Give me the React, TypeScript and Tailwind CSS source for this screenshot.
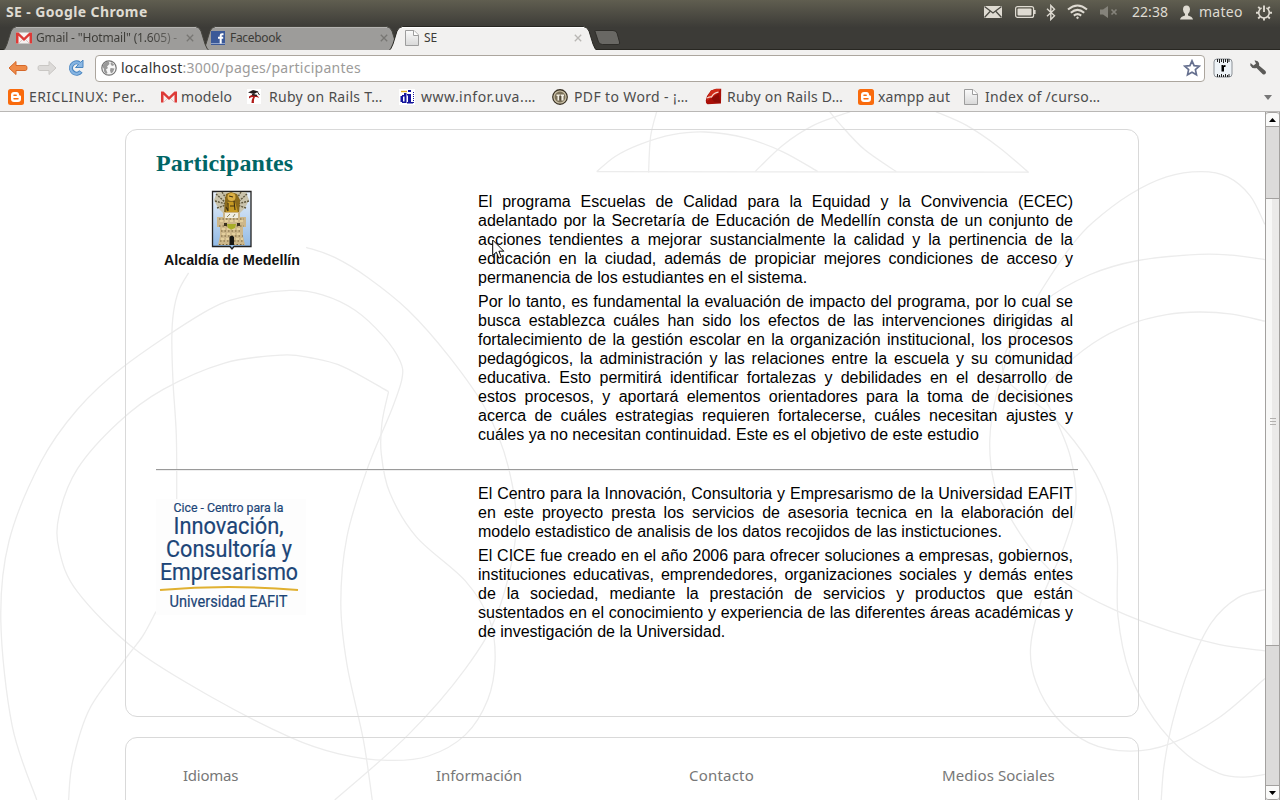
import React from "react";

type Pt = [number, number];

/* Smooth Catmull-Rom path through a list of points. */
function smooth(pts: Pt[]): string {
  let d = `M${pts[0][0]} ${pts[0][1]}`;
  for (let i = 0; i < pts.length - 1; i++) {
    const p0 = pts[i - 1] || pts[i];
    const p1 = pts[i];
    const p2 = pts[i + 1];
    const p3 = pts[i + 2] || p2;
    d += `C${p1[0] + (p2[0] - p0[0]) / 6} ${p1[1] + (p2[1] - p0[1]) / 6} ${p2[0] - (p3[0] - p1[0]) / 6} ${p2[1] - (p3[1] - p1[1]) / 6} ${p2[0]} ${p2[1]}`;
  }
  return d;
}

const leftCurves: Pt[][] = [
  [[750, 312], [820, 335], [900, 380], [1000, 455], [1100, 560], [1190, 680], [1245, 810], [1264, 960], [1220, 1140], [1140, 1270], [1000, 1420], [820, 1568]],
  [[90, 1568], [30, 1400], [2, 1160], [22, 980], [100, 800], [190, 680], [300, 585], [500, 460], [600, 424], [710, 410], [790, 420], [870, 455], [940, 515], [980, 570], [985, 610], [960, 680], [900, 815], [850, 970], [835, 1120], [850, 1260], [890, 1430], [912, 1568]],
  [[168, 1568], [178, 1480], [220, 1360], [305, 1250], [350, 1195], [382, 1140]],
  [[462, 370], [438, 410], [425, 460], [421, 520], [424, 620], [432, 740], [433, 885]],
  [[952, 640], [840, 583], [760, 563], [690, 557], [550, 575], [400, 635], [290, 710], [190, 815], [145, 920], [145, 1000], [190, 1095], [330, 1225], [520, 1335], [710, 1425], [830, 1463], [950, 1478], [1050, 1468], [1140, 1420], [1195, 1340], [1213, 1250], [1200, 1160], [1140, 1070], [1020, 970], [955, 870], [934, 780], [936, 710], [952, 640]],
];

const rightCurves: Pt[][] = [
  [[-106, 140], [-60, 105], [0, 78], [80, 56], [160, 50], [260, 64], [350, 95], [436, 140]],
  [[42, 0], [26, 60], [21, 142]],
  [[282, 140], [350, 80], [425, 35], [515, 4]],
  [[465, 4], [490, 32], [550, 90], [628, 140]],
  [[725, 4], [800, 35], [880, 85], [952, 142]],
  [[1531, 260], [1495, 195], [1440, 152], [1375, 140], [1290, 152], [1200, 192], [1110, 255], [1060, 305], [990, 400], [925, 505], [875, 640], [857, 750], [868, 850], [900, 915], [960, 1000], [1040, 1073], [1160, 1135], [1300, 1185], [1420, 1215], [1531, 1229]],
  [[1531, 340], [1450, 330], [1370, 328], [1220, 342], [1100, 375], [990, 435], [920, 510], [888, 575], [905, 620], [960, 660], [1020, 705], [1100, 800], [1150, 900], [1169, 1010], [1171, 1150], [1200, 1280], [1260, 1385], [1340, 1465], [1420, 1508], [1480, 1516], [1531, 1510]],
  [[1531, 480], [1450, 464], [1370, 459], [1290, 465], [1200, 487], [1110, 530], [1020, 600], [990, 645], [1020, 705], [1055, 790], [1068, 890], [1040, 990], [985, 1110], [957, 1220], [970, 1300], [1020, 1380], [1100, 1438], [1200, 1457], [1300, 1440], [1420, 1380], [1531, 1292]],
  [[1531, 1090], [1465, 1108], [1400, 1165], [1345, 1270], [1305, 1390], [1284, 1490], [1277, 1568]],
  [[-106, 140], [952, 141]],
];

function Backdrop() {
  return (
    <svg className="pointer-events-none absolute inset-0 h-[688px] w-[1265px]" fill="none" stroke="#ececec" strokeWidth="1.3">
      <g transform="translate(0 -2) scale(.40816 .44005)">
        {leftCurves.map((c, i) => (
          <path key={i} d={smooth(c)} vectorEffect="non-scaling-stroke" />
        ))}
      </g>
      <g transform="translate(640 -2) scale(.40816 .44005)">
        {rightCurves.map((c, i) => (
          <path key={i} d={smooth(c)} vectorEffect="non-scaling-stroke" />
        ))}
      </g>
    </svg>
  );
}

const Gmail = () => (
  <svg width="16" height="16" viewBox="0 0 16 16" className="shrink-0">
    <rect x="0" y="2.500" width="16" height="11" fill="#f6f1f0" />
    <path d="M3 13l4-4M13 13L9 9" stroke="#d9c9c7" />
    <path d="M0 2.500h2.500L8 7.800l5.500-5.300H16v11h-2.500V5.800L8 11 2.500 5.800v7.700H0z" fill="#dd3a37" />
  </svg>
);
const Facebook = () => (
  <svg width="14" height="14" viewBox="0 0 14 14" className="shrink-0">
    <rect width="14" height="14" fill="#3b5998" />
    <path d="M0 12h14v1H0z" fill="#8fa3cb" />
    <path d="M12.500 3.200h-1.400c-1 0-1.400.5-1.400 1.400V12.500M7 6.800h5.200" stroke="#fff" strokeWidth="2" fill="none" />
  </svg>
);
const Page = () => (
  <svg width="16" height="16" viewBox="0 0 16 16" className="shrink-0">
    <defs>
      <linearGradient id="pg" x2="0" y2="1"><stop stopColor="#fbfbfb" /><stop offset="1" stopColor="#d8d8d8" /></linearGradient>
    </defs>
    <path d="M1.500.5h8.500l4.500 4.500v10.500h-13z" fill="url(#pg)" stroke="#9d9d9d" />
    <path d="M9.500.5V5.500H14.500" fill="#fff" stroke="#9d9d9d" />
  </svg>
);
const Blogger = () => (
  <svg width="16" height="16" viewBox="0 0 16 16" className="shrink-0">
    <rect width="16" height="16" rx="2.500" fill="#f96b0d" />
    <path d="M6 3h2.500Q11 3 11 5.600q0 .9 1 1 1 0 1 1V10q0 3-3 3H6q-3 0-3-3V6q0-3 3-3z" fill="#fff" />
    <path d="M6 6.200h2.200M6 9.800h4" stroke="#f96b0d" strokeWidth="1.500" strokeLinecap="round" />
  </svg>
);
const RailsT = () => (
  <svg width="14" height="15" viewBox="0 0 14 15" className="shrink-0">
    <rect width="14" height="15" fill="#fff" />
    <path d="M1 3.500L6 1l5.500 1.500L7 5z" fill="#221b1b" />
    <path d="M10.500 3l2 3" stroke="#333" />
    <path d="M2 7.500q3-2.500 5.500-1.500Q11 6 12 9q-2-1.500-4-1Q6.500 10.500 7 14H4.500Q4.500 10.500 6 8 4 7.500 2 9.500z" fill="#b01a17" />
    <path d="M5 5.500l5 1" stroke="#222" strokeWidth="1.500" />
  </svg>
);
const Infor = () => (
  <svg width="16" height="16" viewBox="0 0 16 16" className="shrink-0">
    <rect width="16" height="16" fill="#fff" />
    <path d="M2 2.500h6" stroke="#d9a820" strokeWidth="1.400" />
    <path d="M9 1h3v2H9zM9 5h3v8h2v1.500H8V13h1V6.500H8V5zM5 4h2.500v10H3v-1H1.500V7H3V6h2zM4 7.500v5h1.500v-5z" fill="#14149c" />
    <path d="M14.500 3v11" stroke="#14149c" strokeDasharray="1 1" />
  </svg>
);
const Pdf = () => (
  <svg width="16" height="16" viewBox="0 0 16 16" className="shrink-0">
    <circle cx="8" cy="8" r="7.200" fill="#7b7159" stroke="#3b3427" strokeWidth="1.400" />
    <circle cx="8" cy="8" r="6" fill="none" stroke="#c9bfa6" strokeWidth="1.200" />
    <path d="M4.500 5.500H8V7H7.500v4.500H5.500V7h-1zM8.500 5.500H12V7h-.5v4.500h-2V7h-1z" fill="#f3efe4" />
    <path d="M8 6.500v5" stroke="#302a20" />
  </svg>
);
const Ruby = () => (
  <svg width="17" height="17" viewBox="0 0 17 17" className="shrink-0">
    <path d="M.8 12.500L2 8 6 2.500 11 .8h5.200L16 15.500l-13.500.8Q.5 15.500.8 12.500z" fill="#a80f08" />
    <path d="M6 2.500L11 1h4.500L13 5l-6 4-5 4 1-5z" fill="#cf2a17" />
    <path d="M2 10Q5 8.500 6.500 9 9 4.500 13.500 4.200" fill="none" stroke="#f7d5cc" strokeWidth="1.300" />
    <path d="M6.500 10.500l7-4.500 2 9-6-1z" fill="#8e0b06" />
  </svg>
);

const bookmarks: { w: string; gap: string; tr: string; icon: React.ReactNode; label: string }[] = [
  { w: "w-[153px]", gap: "gap-[5px]", tr: "tracking-[0.42px]", icon: <Blogger />, label: "ERICLINUX: Per…" },
  { w: "w-[86px]", gap: "gap-1", tr: "tracking-[0.15px]", icon: <Gmail />, label: "modelo" },
  { w: "w-[152px]", gap: "gap-2", tr: "tracking-[0.27px]", icon: <RailsT />, label: "Ruby on Rails T…" },
  { w: "w-[153px]", gap: "gap-1.5", tr: "tracking-[0.48px]", icon: <Infor />, label: "www.infor.uva.…" },
  { w: "w-[153px]", gap: "gap-1.5", tr: "tracking-[0.36px]", icon: <Pdf />, label: "PDF to Word - ¡…" },
  { w: "w-[153px]", gap: "gap-[5px]", tr: "tracking-[0.25px]", icon: <Ruby />, label: "Ruby on Rails D…" },
  { w: "w-[105px]", gap: "gap-1", tr: "tracking-[0.15px]", icon: <Blogger />, label: "xampp aut" },
  { w: "w-[150px]", gap: "gap-1.5", tr: "tracking-[0.33px]", icon: <Page />, label: "Index of /curso…" },
];

const Close = ({ active = false }: { active?: boolean }) => (
  <svg width="8" height="8" viewBox="0 0 8 8" className="shrink-0">
    <path d="M.8.8l6.400 6.400M7.200.8L.8 7.200" stroke={active ? "#b9b7b4" : "#777673"} strokeWidth="1.300" />
  </svg>
);

function TabShape({ w, active = false }: { w: number; active?: boolean }) {
  const d = `M0 25.500 Q3 24 5 18 L9 5 Q11 .5 15 .5 H${w - 15} Q${w - 11} .5 ${w - 9} 5 L${w - 5} 18 Q${w - 3} 24 ${w} 25.500`;
  return (
    <svg width={w} height="26" viewBox={`0 0 ${w} 26`} className="absolute top-0 left-0">
      <path d={d} fill={active ? "#f2f1f0" : "#9d9c9a"} stroke={active ? "#282722" : "#45443e"} strokeWidth="1" />
      <path d={`M14 1.500H${w - 14}`} stroke={active ? "#fff" : "#b5b4b2"} />
    </svg>
  );
}

function TitleBar() {
  return (
    <div className="flex h-6 items-center justify-between pr-2 pl-1.5 text-[#dfdbd2]">
      <span className="text-[14px] leading-6 font-bold tracking-[0.38px]">SE - Google Chrome</span>
      <div className="flex items-center">
        <svg width="20" height="14" viewBox="0 0 20 14" className="mr-[12px]">
          <rect x="1" y="1" width="18" height="12" fill="#dfdbd2" />
          <path d="M1.500 1.500L10 8l8.500-6.500M1.500 12.500L7 6.500M18.500 12.500L13 6.500" fill="none" stroke="#4b4a43" strokeWidth="1.300" />
        </svg>
        <svg width="21" height="12" viewBox="0 0 21 12" className="mr-[10px]">
          <rect x=".6" y=".6" width="18" height="10.800" rx="2" fill="none" stroke="#dfdbd2" strokeWidth="1.200" />
          <rect x="2.500" y="2.500" width="14" height="7" rx="1" fill="#dfdbd2" />
          <path d="M19.800 4v4" stroke="#dfdbd2" strokeWidth="1.600" />
        </svg>
        <svg width="10" height="17" viewBox="0 0 10 17" className="mr-[11px]">
          <path d="M1 4.800l7.500 7L4.800 15.500V1.500l3.700 3.700L1 12.200" fill="none" stroke="#dfdbd2" strokeWidth="1.400" />
        </svg>
        <svg width="21" height="16" viewBox="0 0 21 16" className="mr-[12px]" fill="none" stroke="#dfdbd2" strokeWidth="2">
          <path d="M1 5.500q9.500-8 19 0M3.800 8.700q6.700-5.600 13.400 0M6.800 11.600q3.700-3 7.400 0" />
          <circle cx="10.500" cy="13.800" r=".8" fill="#dfdbd2" strokeWidth="1" />
        </svg>
        <svg width="18" height="14" viewBox="0 0 18 14" className="mr-[14px]">
          <path d="M0 4.500h3L8 1v12L3 9.500H0z" fill="#85837b" />
          <path d="M11.500 4.500l5 5M16.500 4.500l-5 5" stroke="#85837b" strokeWidth="1.700" />
        </svg>
        <span className="w-[48px] text-[14px] leading-6 tracking-[0.05px]">22:38</span>
        <svg width="13" height="15" viewBox="0 0 13 15" className="mr-1.5">
          <path d="M6.500.5C9 .5 10 2.200 10 4.500q0 2.500-2 4.500v1.500q4.500 1 5 4H0q.5-3 5-4V9Q3 7 3 4.500 3 .5 6.500.5z" fill="#dfdbd2" />
        </svg>
        <span className="w-[57px] text-[14px] leading-6 tracking-[0.25px]">mateo</span>
        <svg width="16" height="17" viewBox="0 0 16 17" fill="none" stroke="#dfdbd2">
          <path d="M5.600 3.900a5.300 5.300 0 1 0 4.800 0" strokeWidth="1.600" />
          <path d="M8 1.500v6.500" strokeWidth="1.900" />
          <path d="M8 14v2.500M0 8.700h2.500M13.500 8.700H16M2.200 2.800l1.800 1.800M13.800 2.800L12 4.600M2.200 14.500L4 12.700M13.800 14.500L12 12.700" strokeWidth="1.900" />
        </svg>
      </div>
    </div>
  );
}

function Tabs() {
  return (
    <div className="relative flex h-[26px] items-start pt-[2px] text-[12px] text-[#3c3b37]">
      <div className="relative z-10 ml-[2px] h-6 w-[208px]">
        <TabShape w={208} />
        <div className="relative flex h-6 items-center pl-3.5">
          <Gmail />
          <span className="ml-1 w-[150px] bg-gradient-to-r from-[#3c3b37] from-75% to-[#8b8a88] bg-clip-text text-[12px] tracking-[-0.16px] whitespace-nowrap text-transparent">Gmail - "Hotmail" (1.605) -</span>
          <Close />
        </div>
      </div>
      <div className="relative ml-[-9px] h-6 w-[200px]">
        <TabShape w={200} />
        <div className="relative flex h-6 items-center pl-[10px]">
          <Facebook />
          <span className="ml-[5px] w-[150px] tracking-[-0.3px]">Facebook</span>
          <Close />
        </div>
      </div>
      <div className="relative z-10 ml-[-13px] h-6 w-[210px]">
        <TabShape w={210} active />
        <div className="relative flex h-6 items-center pl-4">
          <Page />
          <span className="ml-[4px] w-[150px]">SE</span>
          <Close active />
        </div>
      </div>
      <svg width="27" height="16" viewBox="0 0 27 16" className="mt-[4px] ml-[-4px]">
        <path d="M1 1.500Q1 .5 2 .5H19Q22 .5 23 3l2.500 9q.8 2.500-1.500 2.500H8.500Q5.500 14.500 4.500 12z" fill="#696864" stroke="#2e2d29" />
      </svg>
    </div>
  );
}

function Toolbar() {
  return (
    <div className="flex h-8 items-center pt-1 pl-[8px]">
      <svg width="20" height="16" viewBox="0 0 20 16" className="mr-[9px]">
        <path d="M1 8l7-6.500v4h9.500q1.500 0 1.500 2.500t-1.500 2.500H8v4z" fill="#ef8b48" stroke="#d5682a" />
      </svg>
      <svg width="20" height="16" viewBox="0 0 20 16" className="mr-[10px]">
        <path d="M19 8l-7-6.500v4H2.500Q1 5.500 1 8t1.500 2.500H12v4z" fill="#dcdad8" stroke="#c9c7c4" />
      </svg>
      <svg width="18" height="18" viewBox="0 0 18 18">
        <path d="M12.500 4.200A5.600 5.600 0 1 0 14 12.500" fill="none" stroke="#4a86c0" strokeWidth="4.200" />
        <path d="M16 1v7.500H8.500z" fill="#8db8e3" stroke="#4a86c0" strokeLinejoin="round" />
        <path d="M13 4.800A5.600 5.600 0 1 0 13.500 13" fill="none" stroke="#86b4e2" strokeWidth="2.400" />
      </svg>
      <div className="ml-[10px] flex h-[27px] w-[1110px] shrink-0 items-center rounded-[4px] border border-[#aca69e] bg-white pr-[3px] pl-[5px]">
        <svg width="16" height="16" viewBox="0 0 16 16">
          <circle cx="8" cy="8" r="7.200" fill="#f7f7f7" stroke="#737373" strokeWidth="1.200" />
          <path d="M2.500 4Q5 1 8 2l.5 2L6 6.500 7 8l-2 1.500L6.500 13 5 14Q2 11 3 9L1.500 7zM10 2l3.500 3-2.500 1-1.500-2zM9.500 8l4 .5-1.500 3.500-2 1.500-1-3z" fill="#999" />
        </svg>
        <span className="ml-1 flex-1 text-[14px] leading-5 tracking-[0.26px] text-[#9c9b9a]"><span className="text-[#333]">localhost</span>:3000/pages/participantes</span>
        <svg width="18" height="18" viewBox="0 0 18 18">
          <path d="M9 1.800l2.100 4.800 5.200.5-3.900 3.500 1.100 5.200L9 13.200l-4.500 2.600 1.100-5.200L1.700 7.100l5.200-.5z" fill="#fff" stroke="#66708f" strokeWidth="1.700" />
        </svg>
      </div>
      <svg width="20" height="20" viewBox="0 0 20 20" className="ml-[8px]">
        <rect x="1" y="1" width="18" height="18" rx="3" fill="#eef3f7" stroke="#8c9196" />
        <path d="M4.500 1v3M6.500 1v4M8.500 1v3M10.500 1v4M12.500 1v3M14.500 1v4M16 1v3M4.500 19v-3M6.500 19v-2M8.500 19v-3M10.500 19v-2M12.500 19v-3M14.500 19v-2M16 19v-3" stroke="#222" />
        <path d="M8.500 7h2v1l1-1h1v2h-1.500v4.500H8.500z" fill="#000" />
      </svg>
      <svg width="18" height="18" viewBox="0 0 18 18" className="ml-[16px]">
        <path d="M5.500 1.500Q9 1 10 4q.4 1.500 0 2.500l6.500 5.500q1 1.500 0 2.800t-2.700.4L7.500 9Q3 10 1.300 6.500L1.500 4l3 2.500 2.500-2z" fill="#5b5a58" />
      </svg>
    </div>
  );
}

function Crest() {
  return (
    <svg width="150" height="85" viewBox="156 185 150 85" className="block bg-white">
      <defs>
        <linearGradient id="sky" x2="0" y2="1">
          <stop stopColor="#e9f1fa" /><stop offset="1" stopColor="#8db7e4" />
        </linearGradient>
      </defs>
      <path d="M212.500 191.500h38.500v55h-17l-2 2.500-2-2.500h-17.500z" fill="url(#sky)" stroke="#232323" strokeWidth="1.300" />
      <path d="M217 192h29l3 8-4 8-5 5h-17l-5-5-4-8z" fill="#c9c3ab" />
      <path d="M216 194l10 9M247 194l-10 9M215 201l11 3M249 201l-12 3M222 192l5 8M241 192l-5 8M217 208l9-3M246 208l-9-3" stroke="#5f573d" strokeWidth="1.400" strokeDasharray="2 1" />
      <path d="M226 194l5-2 6 2 3 6-1 13h-15l1-13z" fill="#8a6a1c" />
      <circle cx="231.500" cy="197" r="4" fill="#dcb044" />
      <path d="M228 202h7l3 10h-12z" fill="#c79a22" />
      <path d="M228 203v8M234 201l1 9M230 206h4M229 196l4 1M226 207l2 4" stroke="#3f3012" strokeWidth="1.100" />
      <path d="M223 212h17v5h6v10h-3v9l2 9h-27l2-9v-9h-3V217h6z" fill="#cdb78a" />
      <path d="M225 213h13v5h-13z" fill="#f0eee2" />
      <path d="M227 217l3-3M233 217l2-3" stroke="#8d8460" />
      <path d="M219 219h25M219 226h25M221 231h21M221 236h22M220 241h24M219 244.500h25" stroke="#766338" strokeWidth="1.100" strokeDasharray="1.500 2" />
      <path d="M222 229h19M222 234h20M221 239h22M220 221h24" stroke="#ecd9a4" strokeWidth="1.500" strokeDasharray="3 2" />
      <path d="M224 223h3v3h-3zM237 223h3v3h-3z" fill="#3c3221" />
      <path d="M227 224h9l-1 4-3.500 1.500L228 228z" fill="#a8ad28" />
      <path d="M229.500 245v-8q2-2.500 4.500 0v8z" fill="#181713" />
      <text x="164" y="265" textLength="136" lengthAdjust="spacingAndGlyphs" fontFamily="'Liberation Sans',sans-serif" fontWeight="700" fontSize="15" fill="#111">Alcaldía de Medellín</text>
    </svg>
  );
}

function Cice() {
  return (
    <svg width="150" height="116" viewBox="156 499 150 116" className="block bg-[#fdfdfd]" fill="#1c4577" stroke="#1c4577" strokeWidth=".2" fontFamily="'Liberation Sans Narrow','Roboto','Liberation Sans',sans-serif">
      <text x="173.500" y="511.500" fontSize="13.500" textLength="110" lengthAdjust="spacingAndGlyphs">Cice - Centro para la</text>
      <text x="173.500" y="533.500" fontSize="24.500" textLength="110" lengthAdjust="spacingAndGlyphs">Innovación,</text>
      <text x="166" y="557" fontSize="24.500" textLength="126" lengthAdjust="spacingAndGlyphs">Consultoría y</text>
      <text x="160" y="580" fontSize="24.500" textLength="138" lengthAdjust="spacingAndGlyphs">Empresarismo</text>
      <path d="M160 590Q229 584 298 590" fill="none" stroke="#e0b030" strokeWidth="2" />
      <text x="169.500" y="606.500" fontSize="16" textLength="118" lengthAdjust="spacingAndGlyphs">Universidad EAFIT</text>
    </svg>
  );
}

function ScrollBar() {
  return (
    <div className="flex w-[15px] shrink-0 flex-col border-x border-[#a3a19f] bg-[#dcdbda]">
      <div className="flex h-[15px] items-center justify-center rounded-t-[3px] border-y border-[#a3a19f] bg-[#fafaf9]">
        <svg width="7" height="4"><path d="M0 4l3.500-4L7 4z" /></svg>
      </div>
      <div className="h-[71px]" />
      <div className="flex h-[448px] items-center justify-center border-y border-[#a3a19f] bg-gradient-to-r from-[#f8f8f7] from-50% to-[#ebeae9] to-50%">
        <svg width="6" height="8"><path d="M0 .5h6M0 3.500h6M0 6.500h6" stroke="#b3b1af" /></svg>
      </div>
      <div className="flex-1" />
      <div className="flex h-[15px] items-center justify-center rounded-b-[3px] border-y border-[#a3a19f] bg-[#fafaf9]">
        <svg width="7" height="4"><path d="M0 0l3.500 4L7 0z" /></svg>
      </div>
    </div>
  );
}

export default function App() {
  return (
    <div className="flex h-[800px] w-[1280px] flex-col overflow-hidden bg-white font-['Noto_Sans','Open_Sans',sans-serif]">
      <header className="h-[50px] shrink-0 bg-gradient-to-b from-[#605e50] to-[#3c3b37] to-55% shadow-[inset_0_-1px_0_#282722]">
        <TitleBar />
        <Tabs />
      </header>
      <div className="z-20 h-[62px] shrink-0 border-b border-[#b9b7b5] bg-[#f2f1f0]">
        <Toolbar />
        <div className="flex h-[29px] items-center pl-2 text-[14px] text-[#4c4c4c]">
          {bookmarks.map((b) => (
            <div key={b.label} className={`flex shrink-0 items-center whitespace-nowrap ${b.w} ${b.gap} ${b.tr}`}>
              {b.icon}
              <span className="leading-5">{b.label}</span>
            </div>
          ))}
          <svg width="8" height="5" className="mt-[2px] mr-[8px] ml-auto"><path d="M0 0h8L4 5z" fill="#777" /></svg>
        </div>
      </div>
      <div className="flex min-h-0 flex-1">
        <main className="relative min-w-0 flex-1 overflow-hidden bg-white pt-[17px] pl-[125px]">
          <Backdrop />
          <section className="relative h-[588px] w-[1014px] rounded-[12px] border border-[#d9d9d9] pt-[19px] pl-[30px] font-['Liberation_Sans',sans-serif]">
            <h1 className="h-[29px] font-['Liberation_Serif',serif] text-[24px] leading-7 font-bold tracking-[0.1px] text-[#006666]">Participantes</h1>
            <div className="flex h-[291px] w-[922px] pt-[7px]">
              <div className="w-[322px] shrink-0"><Crest /></div>
              <div className="w-[595px] pt-[7px] text-justify text-[16px] leading-[19px] text-black">
                <p className="mb-[5px]">El programa Escuelas de Calidad para la Equidad y la Convivencia (ECEC) adelantado por la Secretaría de Educación de Medellín consta de un conjunto de acciones tendientes a mejorar sustancialmente la calidad y la pertinencia de la educación en la ciudad, además de propiciar mejores condiciones de acceso y permanencia de los estudiantes en el sistema.</p>
                <p>Por lo tanto, es fundamental la evaluación de impacto del programa, por lo cual se busca establezca cuáles han sido los efectos de las intervenciones dirigidas al fortalecimiento de la gestión escolar en la organización institucional, los procesos pedagógicos, la administración y las relaciones entre la escuela y su comunidad educativa. Esto permitirá identificar fortalezas y debilidades en el desarrollo de estos procesos, y aportará elementos orientadores para la toma de decisiones acerca de cuáles estrategias requieren fortalecerse, cuáles necesitan ajustes y cuáles ya no necesitan continuidad. Este es el objetivo de este estudio</p>
              </div>
            </div>
            <hr className="h-[2px] w-[922px] border-t border-b border-t-[#9a9a9a] border-b-[#eeeeee]" />
            <div className="flex w-[922px] pt-[13px]">
              <div className="w-[322px] shrink-0 pt-[15px]"><Cice /></div>
              <div className="w-[595px] text-justify text-[16px] leading-[19px] text-black">
                <p className="mb-[5px]">El Centro para la Innovación, Consultoria y Empresarismo de la Universidad EAFIT en este proyecto presta los servicios de asesoria tecnica en la elaboración del modelo estadistico de analisis de los datos recojidos de las instictuciones.</p>
                <p>El CICE fue creado en el año 2006 para ofrecer soluciones a empresas, gobiernos, instituciones educativas, emprendedores, organizaciones sociales y demás entes de la sociedad, mediante la prestación de servicios y productos que están sustentados en el conocimiento y experiencia de las diferentes áreas académicas y de investigación de la Universidad.</p>
              </div>
            </div>
          </section>
          <footer className="relative mt-5 flex h-[120px] w-[1014px] rounded-[12px] border border-[#d9d9d9] pt-[25px] pl-[57px] text-[15px] leading-6 text-[#777]">
            <span className="w-[253px] tracking-[-0.25px]">Idiomas</span>
            <span className="w-[253px] tracking-[-0.05px]">Información</span>
            <span className="w-[253px] tracking-[0.2px]">Contacto</span>
            <span className="tracking-[0.08px]">Medios Sociales</span>
          </footer>
          <svg width="13" height="21" viewBox="0 0 13 21" className="absolute top-[127px] left-[492px]">
            <path d="M.7 1v15.500l3.600-3.300 2.500 6 2.600-1.100-2.500-5.900h4.900z" fill="#fff" stroke="#000" />
          </svg>
        </main>
        <ScrollBar />
      </div>
    </div>
  );
}
